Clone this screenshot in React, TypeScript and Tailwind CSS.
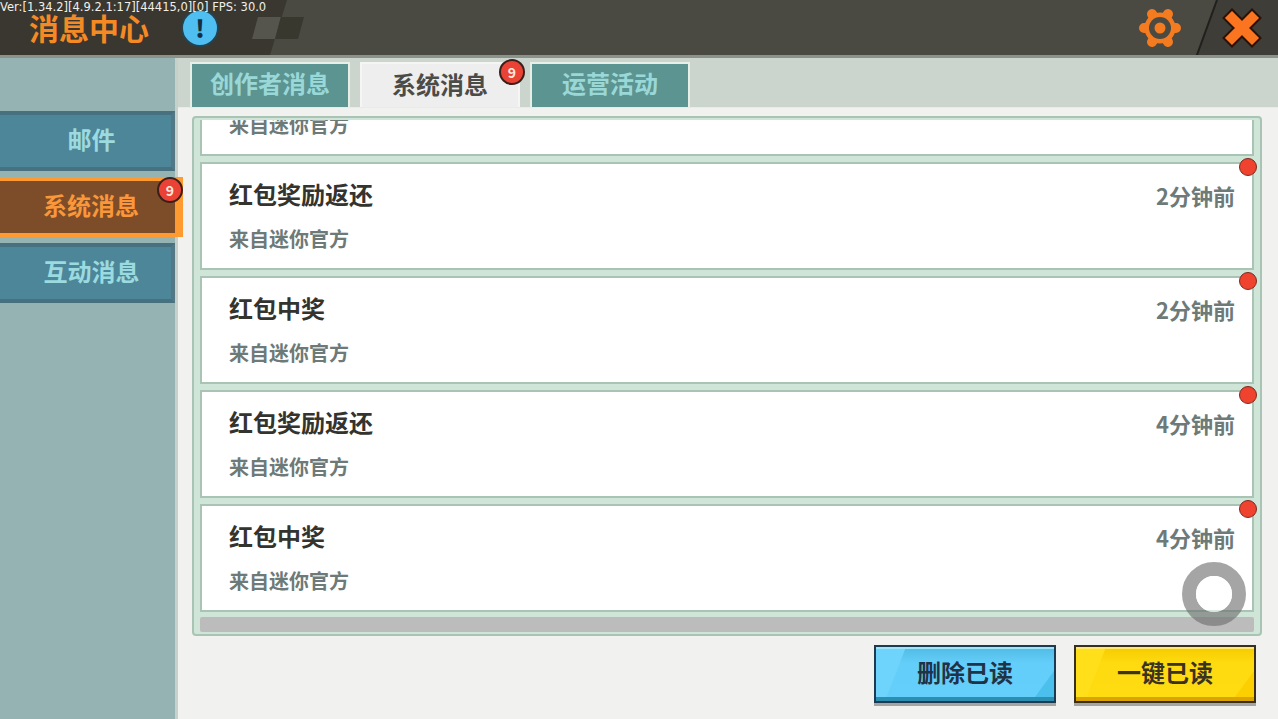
const cjk = "font-['Noto_Sans_CJK_SC','Noto_Sans',sans-serif]"

const messages = [
  { title: '红包奖励返还', time: '2分钟前' },
  { title: '红包中奖', time: '2分钟前' },
  { title: '红包奖励返还', time: '4分钟前' },
  { title: '红包中奖', time: '4分钟前' },
]

function Badge({ className }: { className: string }) {
  return (
    <span className={`absolute flex h-[26px] w-[26px] items-center justify-center rounded-full border-2 border-[#3a1f1a] bg-[#ea4335] text-[14px] font-bold text-[#fde8dc] ${className}`}>
      9
    </span>
  )
}

function Gear() {
  return (
    <svg width="44" height="44" viewBox="0 0 44 44" fill="none">
      <g stroke="#f47b20" strokeWidth="10" strokeLinecap="round">
        <path d="M6 22h32M14 8.1l16 27.8M14 35.9L30 8.1" />
      </g>
      <circle cx="22" cy="22" r="15.5" fill="#f47b20" />
      <circle cx="22" cy="22" r="11" fill="#4a4a43" />
      <circle cx="22" cy="22" r="5.5" fill="#f47b20" />
    </svg>
  )
}

function CloseIcon() {
  return (
    <svg width="40" height="40" viewBox="0 0 40 40" fill="none">
      <path d="M10 10l20 20M30 10L10 30" stroke="#2a1208" strokeWidth="14" strokeLinecap="square" />
      <path d="M10 10l20 20M30 10L10 30" stroke="#fb7420" strokeWidth="10" strokeLinecap="square" />
    </svg>
  )
}

function SideItem({ label }: { label: string }) {
  return (
    <div className="flex h-[60px] w-[175px] items-center justify-center border-y-[4px] border-r-[4px] border-y-[#47717f] border-r-[#527785] bg-[#4d8698] pb-[4px] pl-[12px] text-[24px] font-bold text-[#9bdbe0]">
      {label}
    </div>
  )
}

function Tab({ label }: { label: string }) {
  return (
    <div className="flex h-[45px] w-[160px] items-center justify-center border-2 border-b-0 border-[#e8efe8] bg-[#5c9492] pb-[6px] text-[24px] font-bold text-[#9ad8d8]">
      {label}
    </div>
  )
}

function MessageCard({ title, time }: { title: string; time: string }) {
  return (
    <div className="relative h-[108px] w-full shrink-0 border-2 border-[#a9c4b4] bg-white pl-[27px] pr-[17px]">
      <div className="flex h-[60px] items-center justify-between">
        <span className="text-[24px] font-bold text-[#33332f]">{title}</span>
        <span className="mt-[2px] text-[22px] font-bold text-[#6d7a78]">{time}</span>
      </div>
      <div className="text-[20px] font-bold leading-[30px] text-[#6d7a78]">来自迷你官方</div>
      <span className="absolute right-[-5px] top-[-6px] h-[18px] w-[18px] rounded-full border-[1.5px] border-[#7a2a20] bg-[#f0432f]" />
    </div>
  )
}

function ActionButton({ label, blue }: { label: string; blue?: boolean }) {
  const base = blue
    ? 'border-[#1c3a52] from-[#50bbe4] via-[#64cefa] to-[#64cffb] text-[#1f3348]'
    : 'border-[#38301a] from-[#f6cb00] via-[#fedb10] to-[#fedc12] text-[#3a3222]'
  return (
    <button className={`relative h-[58px] w-[182px] overflow-hidden border-2 bg-gradient-to-b via-30% pb-[4px] text-[24px] font-bold shadow-[0_3px_0_#a5a5a5] ${base}`}>
      <span className={`absolute left-0 top-0 h-full w-[30px] [clip-path:polygon(0_0,100%_0,30%_100%,0_100%)] ${blue ? 'bg-[#6fd4fb]' : 'bg-[#ffdf1a]'}`} />
      <span className={`absolute bottom-0 right-0 h-[30px] w-[22px] [clip-path:polygon(100%_0,100%_100%,0_100%)] ${blue ? 'bg-[#4cc0ec]' : 'bg-[#fbcf00]'}`} />
      <span className={`absolute bottom-0 left-0 h-[4px] w-full ${blue ? 'bg-[#2a8fb0]' : 'bg-[#dca400]'}`} />
      <span className={`absolute left-0 top-0 h-[2px] w-full ${blue ? 'bg-[#9fe4f8]' : 'bg-[#ffe96a]'}`} />
      <span className="relative">{label}</span>
    </button>
  )
}

export default function App() {
  return (
    <div className={`relative flex h-[719px] w-[1278px] flex-col overflow-hidden bg-[#f1f2f0] ${cjk}`}>
      {/* 顶栏 */}
      <header className="relative flex h-[58px] shrink-0 items-center justify-between overflow-hidden border-b-[3px] border-[#8b9289] bg-[#4a4a43] pl-[29px] pr-[16px]">
        <div className="absolute inset-0 bg-[#3a3731] [clip-path:polygon(0_0,287px_0,270px_100%,0_100%)]" />
        <div className="absolute inset-0 bg-[#3e3d38] [clip-path:polygon(1217px_0,100%_0,100%_100%,1197px_100%)]" />
        <div className="relative flex items-center gap-[32px]">
          <span className="mb-[2px] text-[30px] font-bold leading-none text-[#f58a24]">消息中心</span>
          <span className="flex h-[38px] w-[38px] items-center justify-center rounded-full border-2 border-[#25424f] bg-[#4fbef0] text-[24px] font-black text-[#123042]">!</span>
          <div className="ml-[4px] flex h-[22px] w-[46px] -skew-x-[15deg]">
            <div className="flex-1 bg-[#55554e]" />
            <div className="flex-1 bg-[#38382f]" />
          </div>
        </div>
        <div className="relative flex items-center gap-[40px]">
          <Gear />
          <CloseIcon />
        </div>
        <div className="absolute right-[60px] top-0 h-[60px] w-[2px] origin-top rotate-[20deg] bg-[#20201c]" />
      </header>

      <span className="absolute left-0 top-0 font-['DejaVu_Sans',sans-serif] text-[11.5px] leading-[15px] text-[#f0f0e8]">
        Ver:[1.34.2][4.9.2.1:17][44415,0][0] FPS: 30.0
      </span>

      <div className="flex min-h-0 flex-1">
        {/* 左侧菜单 */}
        <aside className="relative flex w-[178px] shrink-0 flex-col gap-[6px] border-r-[3px] border-[#c5d1ca] bg-[#95b3b3] pt-[53px]">
          <SideItem label="邮件" />
          <div className="relative z-10 flex h-[60px] w-[183px] items-center justify-center border-y-[4px] border-r-[8px] border-[#ff9a30] bg-[#7c4d28] pb-[4px] pl-[7px] text-[24px] font-bold text-[#f9973a]">
            系统消息
            <Badge className="right-[-8px] top-[-4px]" />
          </div>
          <SideItem label="互动消息" />
        </aside>

        <main className="flex min-w-0 flex-1 flex-col">
          {/* 标签 */}
          <div className="flex h-[50px] shrink-0 items-end gap-[10px] border-b border-[#e7ece6] bg-[#cbd5ce] pl-[12px]">
            <Tab label="创作者消息" />
            <div className="relative flex h-[45px] w-[160px] items-center justify-center border-2 border-b-0 border-[#f5f6f3] bg-[#eeeeee] pb-[4px] text-[24px] font-bold text-[#4b4b48]">
              系统消息
              <Badge className="right-[-7px] top-[-5px]" />
            </div>
            <Tab label="运营活动" />
          </div>

          <div className="flex min-h-0 flex-1 flex-col pl-[14px] pr-[16px] pt-[8px]">
            {/* 消息列表 */}
            <div className="flex h-[520px] flex-col rounded-[4px] border-2 border-[#a9c4b4] bg-[#cfe5d8] px-[6px] pb-[2px] pt-[2px]">
              <div className="-mr-[6px] flex min-h-0 flex-1 flex-col justify-end gap-[6px] overflow-hidden pr-[6px]">
                <div className="h-[36px] w-full shrink-0 overflow-hidden border-2 border-t-0 border-[#a9c4b4] bg-white pl-[27px]">
                  <div className="mt-[-10px] text-[20px] font-bold leading-[30px] text-[#6d7a78]">来自迷你官方</div>
                </div>
                {messages.map((m, i) => (
                  <MessageCard key={i} title={m.title} time={m.time} />
                ))}
              </div>
              <div className="mt-[5px] h-[15px] shrink-0 rounded-[2px] bg-[#bcbcbc]" />
            </div>

            {/* 底部按钮 */}
            <div className="mt-[9px] flex justify-end gap-[18px] pr-[6px]">
              <ActionButton label="删除已读" blue />
              <ActionButton label="一键已读" />
            </div>
          </div>
        </main>
      </div>

      {/* 悬浮球 */}
      <div className="absolute left-[1182px] top-[562px] h-[64px] w-[64px] rounded-full border-[14px] border-[#6b6b6b] opacity-60">
        <div className="h-full w-full rounded-full bg-white" />
      </div>
    </div>
  )
}
